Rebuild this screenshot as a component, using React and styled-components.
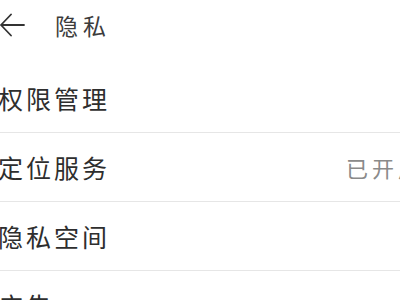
import React from 'react';
import styled, { createGlobalStyle } from 'styled-components';

const GlobalStyle = createGlobalStyle`
    body {
        margin: 0;
        background: #ffffff;
        overflow: hidden;
        font-family: "Noto Sans CJK SC", "Noto Sans", sans-serif;
    }
`;

const Page = styled.div`
    width: 440px;
    background: #ffffff;
`;

const Header = styled.div`
    height: 50px;
    display: flex;
    align-items: center;
    gap: 30px;
`;

const BackIcon = styled.svg`
    width: 26px;
    height: 24px;
    flex-shrink: 0;
    margin-left: -1px;
`;

const Title = styled.h1`
    margin: 0;
    font-size: 23px;
    font-weight: 400;
    letter-spacing: 5px;
    color: #3c3c3c;
`;

const List = styled.ul`
    list-style: none;
    margin: 14px 0 0;
    padding: 0;
`;

const Row = styled.li`
    height: 68px;
    display: flex;
    align-items: center;
    border-bottom: 1px solid #e6e6e6;
`;

const Label = styled.span`
    font-size: 25px;
    letter-spacing: 3px;
    color: #2e2e2e;
    margin-left: -2px;
`;

const Value = styled.span`
    margin-left: auto;
    font-size: 22px;
    letter-spacing: 4px;
    color: #8a8a8a;
    margin-right: 16px;
`;

const items = [
    { label: '权限管理' },
    { label: '定位服务', value: '已开启' },
    { label: '隐私空间' },
    { label: '广告' },
];

export default function App() {
    return (
        <Page>
            <GlobalStyle />
            <Header>
                <BackIcon viewBox="0 0 26 24">
                    <path d="M25 12H2M12 1.5L2 12l10 10.5" fill="none" stroke="#333" strokeWidth="1.8" strokeLinecap="round" strokeLinejoin="round" />
                </BackIcon>
                <Title>隐私</Title>
            </Header>
            <List>
                {items.map((it) => (
                    <Row key={it.label}>
                        <Label>{it.label}</Label>
                        {it.value && <Value>{it.value}</Value>}
                    </Row>
                ))}
            </List>
        </Page>
    );
}
